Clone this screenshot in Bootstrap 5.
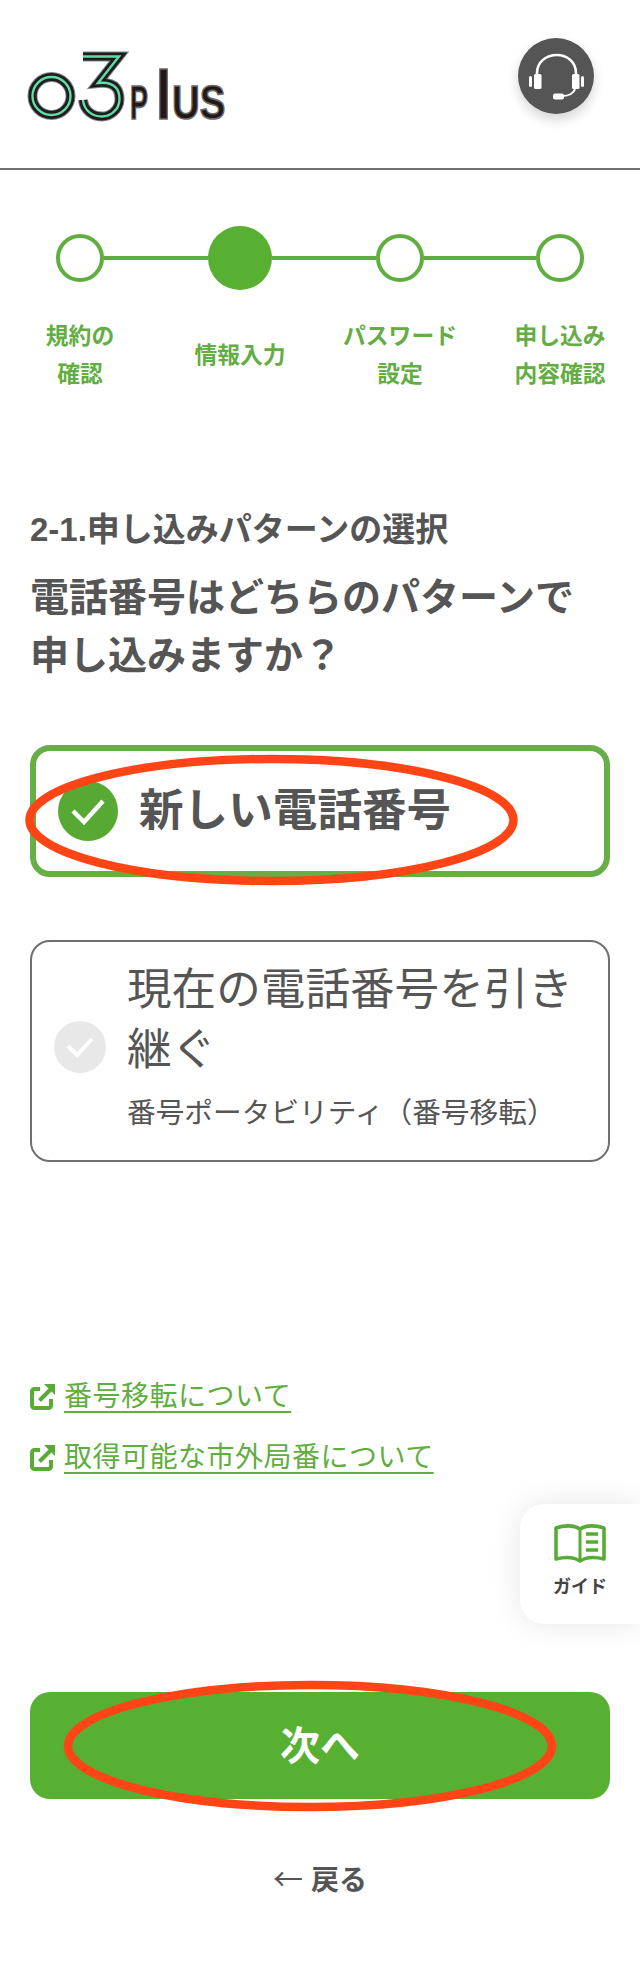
<!DOCTYPE html>
<html lang="ja">
<head>
  <meta charset="UTF-8" />
  <meta name="viewport" content="width=device-width, initial-scale=1" />
  <title>03plus</title>
  <link href="https://cdn.jsdelivr.net/npm/bootstrap@5.3.0/dist/css/bootstrap.min.css" rel="stylesheet" />
  <style>
    body {
      background: #fff;
      color: #555;
      font-family: "Liberation Sans", "Noto Sans CJK JP", sans-serif;
      height: 1984px;
      overflow: hidden;
    }
    .page-wrap { width: 640px; height: 1984px; }
    .site-head { height: 170px; border-bottom: 2px solid #707070; padding: 0 46px 0 22px; }
    .site-logo { width: 210px; height: 80px; margin-top: 4px; overflow: visible; }
    .site-logo text { font-family: "Liberation Sans", sans-serif; font-weight: 700; fill: #231815; stroke: #6b6b70; stroke-width: 1.600px; }
    .help-btn { width: 76px; height: 76px; margin-top: -16px; background: #555; box-shadow: 0 6px 12px rgba(0,0,0,.16); }
    .step-track { padding: 56px 0 0 56px; }
    .step-dot { width: 48px; height: 48px; border: 4px solid #5fae3f; flex: none; }
    .step-dot.now { width: 64px; height: 64px; background: #58b033; border: 0; }
    .step-bar { height: 4px; width: 104px; background: #5fae3f; flex: none; }
    .step-bar.wide { width: 112px; }
    .step-labels { margin-top: 27px; height: 76px; }
    .step-name { width: 160px; font-size: 22.800px; font-weight: 700; line-height: 38px; color: #63ad43; white-space: nowrap; }
    .form-area { padding: 0 30px; }
    .sub-head { font-size: 33px; font-weight: 700; line-height: 44px; margin: 115px 0 0; color: #555; }
    .main-head { font-size: 39px; font-weight: 700; line-height: 57.600px; margin: 17px 0 0; color: #555; }
    .pick-box { border: 2px solid #707070; border-radius: 20px; gap: 21px; padding: 18px 0 27px 22px; margin-top: 63px; height: 222px; }
    .pick-box.on { border: 6px solid #66ae45; height: 132px; margin-top: 61px; padding: 0 0 0 22px; }
    .pick-mark { width: 52px; height: 52px; background: #e8e8e8; flex: none; }
    .pick-box.on .pick-mark { width: 60px; height: 60px; background: #58a834; }
    .pick-title { font-size: 44.600px; line-height: 60px; }
    .pick-box.on .pick-title { font-weight: 700; }
    .pick-note { font-size: 28.700px; line-height: 40px; margin-top: 13px; }
    .info-links { margin-top: 213px; gap: 17px; }
    .info-link { font-size: 28px; line-height: 44px; letter-spacing: .5px; color: #5fae3f; gap: 9px; }
    .info-link span { text-decoration: underline; text-underline-offset: 5px; text-decoration-thickness: 2px; }
    .next-btn { height: 107px; margin-top: 212px; background: #58b033; border: 0; border-radius: 20px; color: #fff; font-size: 40px; font-weight: 700; }
    .back-link { margin-top: 56px; font-size: 28px; line-height: 44px; font-weight: 700; color: #555; }
    .back-arrow { font-family: "Noto Sans CJK JP", sans-serif; font-weight: 400; font-size: 30px; margin-right: 8px; }
    .guide-tab { top: 1504px; right: 0; width: 120px; height: 120px; background: #fff; border-radius: 24px 0 0 24px; box-shadow: 0 0 30px rgba(0,0,0,.1); padding-top: 20px; }
    .guide-tab small { font-size: 18px; font-weight: 700; color: #444; line-height: 24px; margin-top: 11px; }
    .mark-overlay { top: 0; left: 0; pointer-events: none; }
  </style>
</head>
<body>
  <div class="page-wrap position-relative mx-auto">
    <header class="site-head d-flex justify-content-between align-items-center">
      <svg class="site-logo" viewBox="22 44 210 80" role="img" aria-label="03plus">
        <g fill="none">
          <circle cx="51.500" cy="94" r="19" stroke="#85858a" stroke-width="10" />
          <circle cx="51.500" cy="94" r="19" stroke="#1d1d20" stroke-width="8" />
          <circle cx="51.500" cy="94" r="19" stroke="#62dca6" stroke-width="2.400" />
          <path d="M83 54.500H119L98 81C118 79 119.500 91 119.500 97C119.500 108 110 114.500 102 114.500C93 114.500 84 109 83 98" stroke="#85858a" stroke-width="10" />
          <path d="M83 54.500H119L98 81C118 79 119.500 91 119.500 97C119.500 108 110 114.500 102 114.500C93 114.500 84 109 83 98" stroke="#1d1d20" stroke-width="8" />
          <path d="M83 54.500H119L98 81C118 79 119.500 91 119.500 97C119.500 108 110 114.500 102 114.500C93 114.500 84 109 83 98" stroke="#62dca6" stroke-width="2.400" />
        </g>
        <text transform="translate(130 117) scale(.56 1)" font-size="48">P</text>
        <text transform="translate(156 117) scale(.8 1)" font-size="68">l</text>
        <text transform="translate(172 117) scale(.8 1)" font-size="48">US</text>
      </svg>
      <a href="#" class="help-btn rounded-circle d-block" aria-label="サポート">
        <svg width="76" height="76" viewBox="0 0 76 76" class="d-block">
          <path d="M19 37V35C19 24 28 17 39 17C49 17 58 24 58 35V37" fill="none" stroke="#fff" stroke-width="2.600" />
          <rect x="16" y="36" width="7.500" height="15" rx="1.500" fill="#fff" />
          <rect x="54" y="36" width="7.500" height="15" rx="1.500" fill="#fff" />
          <rect x="11" y="38" width="3" height="11" rx="1.500" fill="#fff" />
          <rect x="63" y="38" width="3" height="11" rx="1.500" fill="#fff" />
          <path d="M57 51C56 55 51 58 45 58" fill="none" stroke="#fff" stroke-width="2" />
          <rect x="35" y="55.500" width="11" height="6" rx="2" fill="#fff" />
        </svg>
      </a>
    </header>

    <div class="step-track d-flex align-items-center">
      <div class="step-dot rounded-circle"></div>
      <div class="step-bar"></div>
      <div class="step-dot now rounded-circle"></div>
      <div class="step-bar"></div>
      <div class="step-dot rounded-circle"></div>
      <div class="step-bar wide"></div>
      <div class="step-dot rounded-circle"></div>
    </div>
    <div class="step-labels d-flex align-items-center text-center">
      <div class="step-name">規約の<br />確認</div>
      <div class="step-name">情報入力</div>
      <div class="step-name">パスワード<br />設定</div>
      <div class="step-name">申し込み<br />内容確認</div>
    </div>

    <main class="form-area">
      <h2 class="sub-head">2-1.申し込みパターンの選択</h2>
      <h1 class="main-head">電話番号はどちらのパターンで<br />申し込みますか？</h1>

      <div class="pick-box on d-flex align-items-center">
        <div class="pick-mark rounded-circle d-flex align-items-center justify-content-center">
          <svg width="36" height="28" viewBox="0 0 36 28"><path d="M3 14L14 25L33 4" fill="none" stroke="#fff" stroke-width="4.500" /></svg>
        </div>
        <div class="pick-title">新しい電話番号</div>
      </div>

      <div class="pick-box d-flex align-items-center">
        <div class="pick-mark rounded-circle d-flex align-items-center justify-content-center">
          <svg width="30" height="22" viewBox="0 0 30 22"><path d="M3 10L12 19L27 3" fill="none" stroke="#fff" stroke-width="4" /></svg>
        </div>
        <div>
          <div class="pick-title">現在の電話番号を引き継ぐ</div>
          <div class="pick-note">番号ポータビリティ（番号移転）</div>
        </div>
      </div>

      <div class="info-links d-flex flex-column">
        <a href="#" class="info-link d-flex align-items-center text-decoration-none">
          <svg width="25" height="26" viewBox="0 0 25 26"><path d="M10 5H4.500A2.500 2.500 0 0 0 2 7.500V21.500A2.500 2.500 0 0 0 4.500 24H18.500A2.500 2.500 0 0 0 21 21.500V15" fill="none" stroke="#58ac36" stroke-width="4" /><path d="M9.500 16.500L21 5" fill="none" stroke="#58ac36" stroke-width="4" /><path d="M14 0H25V11Z" fill="#58ac36" /></svg>
          <span>番号移転について</span>
        </a>
        <a href="#" class="info-link d-flex align-items-center text-decoration-none">
          <svg width="25" height="26" viewBox="0 0 25 26"><path d="M10 5H4.500A2.500 2.500 0 0 0 2 7.500V21.500A2.500 2.500 0 0 0 4.500 24H18.500A2.500 2.500 0 0 0 21 21.500V15" fill="none" stroke="#58ac36" stroke-width="4" /><path d="M9.500 16.500L21 5" fill="none" stroke="#58ac36" stroke-width="4" /><path d="M14 0H25V11Z" fill="#58ac36" /></svg>
          <span>取得可能な市外局番について</span>
        </a>
      </div>

      <button type="button" class="btn next-btn w-100 d-block">次へ</button>
      <a href="#" class="back-link d-block text-center text-decoration-none"><span class="back-arrow">←</span>戻る</a>
    </main>

    <a href="#" class="guide-tab position-absolute d-flex flex-column align-items-center text-decoration-none">
      <svg width="52" height="40" viewBox="0 0 52 40">
        <path d="M26 37C20 33 10 33 2 35V4C10 1 20 1 26 5C32 1 42 1 50 4V35C42 33 32 33 26 37Z" fill="none" stroke="#58ac36" stroke-width="3.600" stroke-linejoin="round" />
        <path d="M26 5V37" stroke="#58ac36" stroke-width="3" />
        <path d="M32 10H44M32 18H44M32 26H44" stroke="#58ac36" stroke-width="3.600" />
      </svg>
      <small>ガイド</small>
    </a>

    <svg class="mark-overlay position-absolute" width="640" height="1984" viewBox="0 0 640 1984">
      <ellipse cx="271.500" cy="820" rx="242" ry="61" fill="none" stroke="#ff4416" stroke-width="8.500" />
      <ellipse cx="310" cy="1746" rx="242" ry="61" fill="none" stroke="#ff4416" stroke-width="8.500" />
    </svg>
  </div>
  <script src="https://cdn.jsdelivr.net/npm/bootstrap@5.3.0/dist/js/bootstrap.bundle.min.js"></script>
</body>
</html>
